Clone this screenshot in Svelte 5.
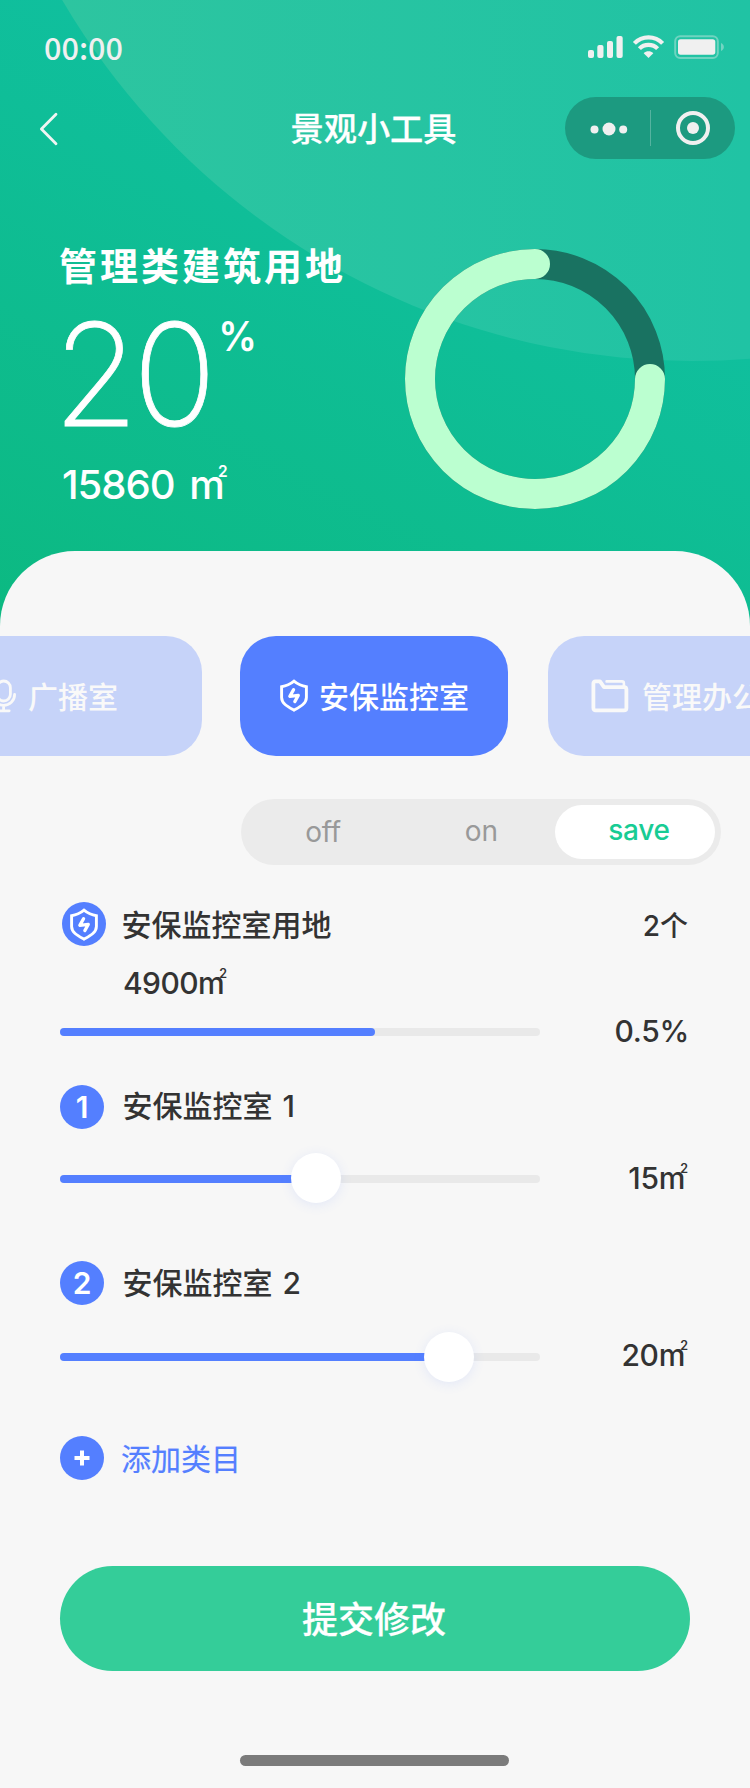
<script>
  const areas = [
    { id: 1, name: '安保监控室 1', value: 15, fill: 256 },
    { id: 2, name: '安保监控室 2', value: 20, fill: 389 }
  ];
</script>

{#snippet shield(w, h)}
  <svg class="shield" width={w} height={h} viewBox="0 0 28 33" fill="none" stroke="#fff" stroke-linejoin="round" stroke-linecap="round">
    <path stroke-width="2.9" stroke-linejoin="miter" d="M14 2.2C10.6 5 6 7.1 1.6 7.7V18.6C1.6 24.6 8 27.8 14 31.2C20 27.8 26.4 24.6 26.4 18.6V7.7C22 7.1 17.4 5 14 2.2Z" />
    <path stroke-width="3.2" d="M13.6 10.6L9.8 17.4L18.3 16.4L14.8 22.6" />
  </svg>
{/snippet}

<main class="page">
  <header class="top">
    <svg class="glow" width="750" height="626" viewBox="0 0 750 626">
      <defs>
        <linearGradient id="glow" gradientUnits="userSpaceOnUse" x1="62" y1="0" x2="750" y2="0">
          <stop offset="0" stop-color="#2dc5a0" />
          <stop offset="1" stop-color="#20c3a4" />
        </linearGradient>
      </defs>
      <circle cx="692" cy="-369" r="730" fill="url(#glow)" />
    </svg>

    <div class="status">
      <span class="time">00:00</span>
      <svg width="138" height="26" viewBox="0 0 138 26" fill="#f0f0f0">
        <rect x="1" y="16" width="6" height="8" rx="2" />
        <rect x="10.3" y="11" width="6.2" height="13" rx="2" />
        <rect x="20" y="7" width="6" height="17" rx="2" />
        <rect x="29.5" y="2" width="6.2" height="22" rx="2" />
        <g fill="none" stroke="#f0f0f0" stroke-width="4.2">
          <path d="M47.4 9.4C55 1.4 68 1.4 75.6 9.4" />
          <path d="M52.4 14.6C57.2 9.6 65.8 9.6 70.6 14.6" />
        </g>
        <path d="M61.5 24L56.7 19.2C59.4 16.6 63.6 16.6 66.3 19.2Z" />
        <rect x="88.2" y="2.2" width="42.6" height="21.8" rx="5" fill="none" stroke="#f0f0f0" stroke-opacity=".38" stroke-width="2" />
        <rect x="91" y="5.3" width="37.3" height="15.4" rx="2.6" />
        <path d="M134 9V17C137.8 15.6 137.8 10.4 134 9Z" fill-opacity=".4" />
      </svg>
    </div>

    <nav class="nav">
      <svg class="back" width="20" height="34" viewBox="0 0 20 34" fill="none" stroke="#f0f5f3" stroke-width="2.8" stroke-linecap="round" stroke-linejoin="round">
        <path d="M17 2.2L2.4 17L17 31.8" />
      </svg>
      <h1>景观小工具</h1>
      <svg class="capsule" width="170" height="62" viewBox="0 0 170 62" fill="#f0f0f0">
        <rect width="170" height="62" rx="31" fill="#1c9a80" />
        <circle cx="29.5" cy="32.4" r="4" />
        <circle cx="44" cy="32" r="6.5" />
        <circle cx="58.2" cy="32.4" r="4" />
        <path d="M85.5 13V49" stroke="#fff" stroke-opacity=".25" />
        <circle cx="128" cy="31" r="15" fill="none" stroke="#f0f0f0" stroke-width="4" />
        <circle cx="128" cy="31" r="6" />
      </svg>
    </nav>

    <section class="hero">
      <div class="summary">
        <h2>管理类建筑用地</h2>
        <div class="percent"><span class="big">20</span><span class="sign">%</span></div>
        <div class="total">15860 <span class="m">m<sup>2</sup></span></div>
      </div>
      <svg class="ring" width="260" height="260" viewBox="0 0 260 260" fill="none" stroke-width="30">
        <circle cx="130" cy="130" r="115" stroke="#197261" />
        <path d="M245 130A115 115 0 1 1 130 15" stroke="#bbffd0" stroke-linecap="round" />
      </svg>
    </section>
  </header>

  <section class="sheet">
    <div class="tabs">
      <div class="tab mic">
        <svg width="32" height="34" viewBox="0 0 32 34" fill="none" stroke="#f9f9f9" stroke-width="2.8" stroke-linecap="round">
          <rect x="12" y="2" width="13.4" height="20" rx="6.7" />
          <path d="M7.6 15.5C7.6 22 12.6 26.3 18.6 26.3S29.6 22 29.6 15.5M18.6 26.6V31.6M13.4 31.8H24.2" />
        </svg>
        <span>广播室</span>
      </div>
      <div class="tab active">
        {@render shield(28, 33)}
        <span>安保监控室</span>
      </div>
      <div class="tab folder">
        <svg width="38" height="34" viewBox="0 0 38 34" fill="none" stroke="#f9f9f9" stroke-linejoin="round" stroke-linecap="round">
          <path stroke-width="3.8" d="M2.4 4.6Q2.4 2.4 4.4 2.4H9L13 8.2H33Q35.4 8.2 35.4 10.6V29Q35.4 31.4 33 31.4H4.6Q2.4 31.4 2.4 29Z" />
          <path stroke-width="2.6" d="M15.6 2.4H31Q32.9 2.4 32.9 4.4V7" />
        </svg>
        <span>管理办公室</span>
      </div>
    </div>

    <div class="segment">
      <span class="off">off</span>
      <span class="on">on</span>
      <span class="save">save</span>
    </div>

    <div class="group">
      <div class="row lead">
        <div class="badge">{@render shield(28, 33)}</div>
        <span class="name">安保监控室用地</span>
        <span class="count">2个</span>
      </div>
      <div class="area">4900<span class="m">m<sup>2</sup></span></div>
      <div class="row bar">
        <div class="track"><div class="fill round" style="width: 315px"></div></div>
        <span class="value pct">0.5%</span>
      </div>
    </div>

    {#each areas as a}
      <div class="item">
        <div class="row">
          <div class="badge">{a.id}</div>
          <span class="name">{a.name}</span>
        </div>
        <div class="row bar">
          <div class="track">
            <div class="fill" style="width: {a.fill}px"></div>
            <div class="thumb" style="left: {a.fill}px"></div>
          </div>
          <span class="value">{a.value}<span class="m">m<sup>2</sup></span></span>
        </div>
      </div>
    {/each}

    <div class="row add">
      <div class="badge">
        <svg width="16" height="16" viewBox="0 0 16 16" stroke="#fff" stroke-width="4"><path d="M8 .5V15.5M.5 8H15.5" /></svg>
      </div>
      <span class="name">添加类目</span>
    </div>

    <button>提交修改</button>
    <div class="home"></div>
  </section>
</main>

<style>
  :global(body) { margin: 0; }
  .page {
    width: 750px;
    height: 1788px;
    overflow: hidden;
    background: #f7f7f7;
    color: #333;
    font-family: Inter, "Noto Sans CJK SC", sans-serif;
    font-weight: 500;
  }
  h1, h2 { margin: 0; font-weight: 500; }
  svg { display: block; flex: none; }

  .top {
    position: relative;
    height: 626px;
    background: linear-gradient(27deg, #0cb981 0%, #11c1a6 85%);
    color: #fff;
  }
  .glow { position: absolute; inset: 0; }
  .status, .nav, .hero { position: relative; display: flex; justify-content: space-between; }
  .status { height: 97px; box-sizing: border-box; padding: 34px 25px 0 44px; }
  .time {
    margin-top: -2px;
    font: 500 30.6px/30px "Noto Sans CJK SC", sans-serif;
    color: #f0f0f0;
  }
  .nav { height: 62px; align-items: center; padding: 0 15px 0 39px; }
  .back { margin-top: 2px; }
  h1 { margin-left: 123px; padding-top: 2px; font-size: 33.2px; line-height: 62px; }
  h1, button { -webkit-text-stroke: .25px currentColor; }
  .hero { padding: 88px 85px 0 59px; }
  h2 { font-size: 38px; line-height: 38px; letter-spacing: 3px; font-weight: 600; white-space: nowrap; }
  .percent { display: flex; margin-top: 36px; height: 106px; }
  .big {
    width: 165px;
    margin-left: -6px;
    font: 230 143px/106px Inter, sans-serif;
    letter-spacing: -6px;
    -webkit-text-stroke: .8px currentColor;
    transform: scaleX(.97);
    transform-origin: 0 50%;
  }
  .sign { font-size: 41px; line-height: 30px; font-weight: 600; transform: scaleX(.94); margin-left: -1px; }
  .total { margin: 36px 0 0 3px; font-size: 40px; line-height: 44px; letter-spacing: -1px; word-spacing: 5px; }
  .m { position: relative; }
  .m sup { position: absolute; right: -3px; top: 3px; font-size: 12.5px; line-height: 12px; font-weight: 600; letter-spacing: 0; vertical-align: baseline; }
  .total .m sup { right: -4px; top: 6px; font-size: 15.5px; }
  .ring { margin-top: 2px; }

  .sheet {
    position: relative;
    height: 1237px;
    margin-top: -75px;
    border-radius: 75px 75px 0 0;
    background: #f7f7f7;
    display: flex;
    flex-direction: column;
  }
  .tabs { display: flex; margin: 85px 0 0 -66px; width: 882px; }
  .tab {
    flex: none;
    width: 268px;
    height: 120px;
    box-sizing: border-box;
    border-radius: 36px;
    background: #c6d3f9;
    color: #f9f9f9;
    display: flex;
    align-items: center;
    font-size: 30px;
    white-space: nowrap;
  }
  .tab span { padding-bottom: 2px; }
  .tab svg { margin-bottom: 1px; }
  .mic { padding-left: 51px; gap: 11px; }
  .active { margin: 0 40px 0 38px; background: #547fff; color: #fff; padding-left: 40px; gap: 11px; }
  .folder { padding-left: 43px; gap: 13px; }

  .segment {
    margin: 43px 0 0 241px;
    width: 480px;
    height: 66px;
    box-sizing: border-box;
    padding: 6px;
    border-radius: 33px;
    background: #ebebeb;
    color: #999;
    display: flex;
    font-size: 28px;
    font-weight: 400;
    line-height: 54px;
    text-align: center;
  }
  .off { width: 152px; letter-spacing: -.3px; }
  .on { width: 147px; padding-left: 9px; line-height: 52px; }
  .save { width: 152px; padding-left: 8px; line-height: 50px; height: 54px; border-radius: 27px; background: #fff; color: #18cc94; font-weight: 550; letter-spacing: -.3px; }

  .row { display: flex; align-items: center; margin: 0 63px 0 60px; height: 44px; font-size: 30px; white-space: nowrap; }
  .badge {
    flex: none;
    width: 44px;
    height: 44px;
    border-radius: 50%;
    background: #547fff;
    color: #fff;
    display: flex;
    align-items: center;
    justify-content: center;
    font-weight: 600;
    font-size: 30px;
  }
  .name { margin-left: 18.5px; padding-bottom: 3px; }
  .group { margin-top: 37px; height: 183px; }
  .lead { margin: 0 62px 0 62px; }
  .lead .name { margin-left: 15.5px; padding-bottom: 2px; }
  .count { margin-left: auto; font-size: 28px; }
  .area { margin: 17px 0 0 123px; font-size: 30px; line-height: 40px; letter-spacing: -.6px; font-weight: 450; }
  .bar { justify-content: space-between; height: 50px; }
  .group .bar { margin-top: 3px; margin-right: 61px; height: 52px; }
  .group .value { letter-spacing: -.3px; }
  .track { position: relative; width: 480px; height: 8px; border-radius: 4px; background: #e9e9e9; }
  .fill { height: 8px; border-radius: 4px 0 0 4px; background: #547fff; }
  .round { border-radius: 4px; }
  .thumb {
    position: absolute;
    top: -22px;
    width: 50px;
    height: 50px;
    margin-left: -25px;
    border-radius: 50%;
    background: #fff;
    box-shadow: 0 2px 12px rgba(84, 127, 255, .12);
  }
  .value { padding-bottom: 2px; }
  .item .value { margin-right: 2px; letter-spacing: -.3px; }
  .item { height: 176px; }
  .item .name { padding-bottom: 7px; word-spacing: 2px; }
  .item .bar { margin-top: 25px; }
  .item + .item { height: 175px; }
  .item + .item .name { padding-bottom: 5px; }
  .item + .item .bar { margin-top: 27px; }
  .item + .item .thumb { top: -21px; }
  .item + .item .value { padding-bottom: 4px; }
  .add { color: #547fff; }
  .add .name { font-weight: 400; margin-left: 17px; padding-bottom: 3px; -webkit-text-stroke: .2px currentColor; }

  button {
    margin: 86px 60px 0;
    height: 105px;
    flex: none;
    border: 0;
    border-radius: 53px;
    background: #34cd99;
    color: #fff;
    font: 500 36px/105px Inter, "Noto Sans CJK SC", sans-serif;
    padding: 2px 2px 0 0;
  }
  .home { width: 269px; height: 11px; margin: 84px 0 0 240px; border-radius: 5.5px; background: #7b7b7b; }
</style>
